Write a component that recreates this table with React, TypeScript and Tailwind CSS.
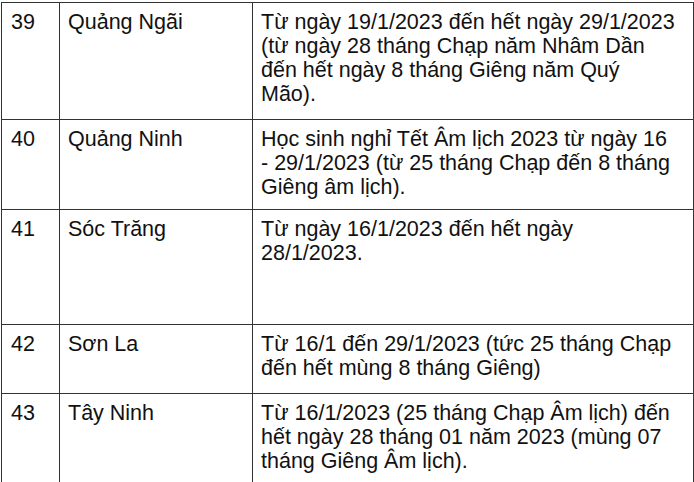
import React from "react";

const rows = [
  {
    no: "39",
    name: "Quảng Ngãi",
    text: "Từ ngày 19/1/2023 đến hết ngày 29/1/2023 (từ ngày 28 tháng Chạp năm Nhâm Dần đến hết ngày 8 tháng Giêng năm Quý Mão).",
    h: "h-[117px]",
  },
  {
    no: "40",
    name: "Quảng Ninh",
    text: "Học sinh nghỉ Tết Âm lịch 2023 từ ngày 16 - 29/1/2023 (từ 25 tháng Chạp đến 8 tháng Giêng âm lịch).",
    h: "h-[90px]",
  },
  {
    no: "41",
    name: "Sóc Trăng",
    text: "Từ ngày 16/1/2023 đến hết ngày 28/1/2023.",
    h: "h-[115px]",
  },
  {
    no: "42",
    name: "Sơn La",
    text: "Từ 16/1 đến 29/1/2023 (tức 25 tháng Chạp đến hết mùng 8 tháng Giêng)",
    h: "h-[69px]",
  },
  {
    no: "43",
    name: "Tây Ninh",
    text: "Từ 16/1/2023 (25 tháng Chạp Âm lịch) đến hết ngày 28 tháng 01 năm 2023 (mùng 07 tháng Giêng Âm lịch).",
    h: "h-[100px]",
  },
];

export default function App() {
  return (
    <div className="w-[694px] h-[482px] overflow-hidden bg-white pt-[2px] pl-[1px] font-['Liberation_Sans',Arial,sans-serif] text-[21.5px] leading-[24px] text-[#111]">
      <table className="border-collapse table-fixed w-[692px]">
        <colgroup>
          <col className="w-[58px]" />
          <col className="w-[193px]" />
          <col className="w-[441px]" />
        </colgroup>
        <tbody>
          {rows.map((r) => (
            <tr key={r.no} className={r.h}>
              <td className="border border-[#333] align-top pl-[9px] pt-[7px]">{r.no}</td>
              <td className="border border-[#333] align-top pl-[8px] pt-[7px]">{r.name}</td>
              <td className="border border-[#333] align-top pl-[8px] pr-[15px] pt-[7px]">{r.text}</td>
            </tr>
          ))}
        </tbody>
      </table>
    </div>
  );
}
